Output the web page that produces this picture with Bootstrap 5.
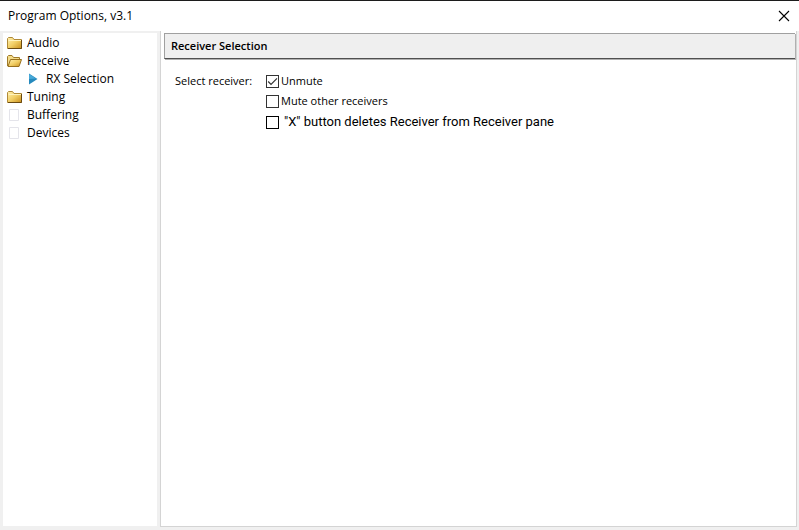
<!DOCTYPE html>
<html lang="en">
<head>
<meta charset="utf-8">
<meta name="viewport" content="width=device-width, initial-scale=1">
<title>Program Options, v3.1</title>
<link href="https://cdn.jsdelivr.net/npm/bootstrap@5.3.0/dist/css/bootstrap.min.css" rel="stylesheet">
<style>
body { background: #f0f0f0; color: #000; font: 12px/18px "Open Sans", "Noto Sans", sans-serif; }
.titlebar { background: #fff; border-top: 1px solid #1c1c1c; height: 31px; padding: 0 8px; }
.titlebar h1 { font-size: 12px; line-height: 18px; font-weight: 400; }
.close-btn { width: 14px; height: 20px; line-height: 0; }
.workspace { padding: 0 2px 3px 3px; gap: 3px; }
.tree { width: 154px; padding: 1px 4px; margin: 2px 0 1px; background: #fff; }
.tree a { color: #000; height: 18px; gap: 5px; }
.tree .subpages a { padding-left: 20px; gap: 3px; }
.tree svg { width: 15px; height: 14px; }
.tree .subpages svg { width: 16px; }
.pane { background: #fff; border: 1px solid #d4d4d4; border-top: 0; padding: 2px 1px 0 3px; }
.pane-head { background: #efefef; border: 1px solid #a0a0a0; border-right: 0; border-bottom-color: #505050; box-shadow: 1px 1px 0 #b0b0b0; padding: 2px 6px 3px; }
.pane-head h2 { font-size: 11px; line-height: 19px; font-weight: 600; }
.settings { font-size: 11px; padding: 12px 11px; }
.settings-label { width: 91px; }
.settings label { line-height: 20px; }
.box { appearance: none; width: 13px; height: 13px; margin: 0; border: 1px solid #333; background: #fff; border-radius: 0; }
.box:checked { background: #fff url("data:image/svg+xml,%3Csvg xmlns='http://www.w3.org/2000/svg' viewBox='0 0 11 11'%3E%3Cpath d='M1.2 5.5 4 8.3 10 2.3' fill='none' stroke='%23333' stroke-width='1.2'/%3E%3C/svg%3E"); }
.check { gap: 2px; }
.check-added { gap: 5px; padding-top: 1px; font-family: Roboto, "Liberation Sans", Arial, sans-serif; font-size: 13px; }
.check-added .box { border-color: #000; }
</style>
</head>
<body class="d-flex flex-column min-vh-100">
<header class="titlebar d-flex align-items-center justify-content-between">
  <h1 class="m-0">Program Options, v3.1</h1>
  <button type="button" class="close-btn btn p-0 border-0 rounded-0" aria-label="Close">
    <svg width="12" height="12" viewBox="0 0 12 12"><path d="M1 1 11 11M11 1 1 11" fill="none" stroke="#000" stroke-width="1.1"/></svg>
  </button>
</header>
<div class="workspace d-flex flex-grow-1">
  <nav class="tree flex-shrink-0" aria-label="Option pages">
    <ul class="list-unstyled m-0 p-0">
      <li><a class="d-flex align-items-center text-decoration-none" href="#audio">
        <svg viewBox="0 0 15 14"><defs><linearGradient id="gold" x1="0" y1="0" x2="1" y2="1"><stop offset="0" stop-color="#fff0b0"/><stop offset=".5" stop-color="#f2cf66"/><stop offset="1" stop-color="#c98f1c"/></linearGradient></defs><path d="M.5 12.5V2.5L1.5 1.5H5.5L7 3.5H14.5V12.5Z" fill="url(#gold)" stroke="#b08a38"/><path d="M1.5 4.5H14" stroke="#fff3bd"/><path d="M1 12.5H14.5V4" fill="none" stroke="#6a4a12"/></svg>Audio</a></li>
      <li><a class="d-flex align-items-center text-decoration-none" href="#receive">
        <svg viewBox="0 0 15 14"><path d="M.5 12V2.5L1.5 1.5H5L6.5 3.5H12.5V6" fill="#f4dc8a" stroke="#a07a28"/><path d="M1 12.5 3.5 5.5H14.5L12 12.5Z" fill="url(#gold)" stroke="#98701e"/></svg>Receive</a>
        <ul class="subpages list-unstyled m-0 p-0">
          <li><a class="d-flex align-items-center text-decoration-none" href="#rx" aria-current="page">
            <svg viewBox="0 0 16 14"><path d="M2 1.5 10.5 7 2 12.5Z" fill="#2589bd"/><path d="M2 2 9 6.5 2 7Z" fill="#48a9d8"/></svg>RX Selection</a></li>
        </ul>
      </li>
      <li><a class="d-flex align-items-center text-decoration-none" href="#tuning">
        <svg viewBox="0 0 15 14"><path d="M.5 12.5V2.5L1.5 1.5H5.5L7 3.5H14.5V12.5Z" fill="url(#gold)" stroke="#b08a38"/><path d="M1.5 4.5H14" stroke="#fff3bd"/><path d="M1 12.5H14.5V4" fill="none" stroke="#6a4a12"/></svg>Tuning</a></li>
      <li><a class="d-flex align-items-center text-decoration-none" href="#buffering">
        <svg viewBox="0 0 15 14"><path d="M2.5 1.5H11.5V12.5H2.5Z" fill="#fff" stroke="#e4e4ea"/></svg>Buffering</a></li>
      <li><a class="d-flex align-items-center text-decoration-none" href="#devices">
        <svg viewBox="0 0 15 14"><path d="M2.5 1.5H11.5V12.5H2.5Z" fill="#fff" stroke="#e4e4ea"/></svg>Devices</a></li>
    </ul>
  </nav>
  <main class="pane flex-grow-1" id="rx">
    <div class="pane-head"><h2 class="m-0">Receiver Selection</h2></div>
    <form class="settings d-flex">
      <label class="settings-label flex-shrink-0" for="unmute">Select receiver:</label>
      <div class="d-flex flex-column">
        <div class="check d-flex align-items-center"><input class="box" type="checkbox" id="unmute" checked><label for="unmute">Unmute</label></div>
        <div class="check d-flex align-items-center"><input class="box" type="checkbox" id="mute-others"><label for="mute-others">Mute other receivers</label></div>
        <div class="check check-added d-flex align-items-center"><input class="box" type="checkbox" id="x-deletes"><label for="x-deletes">"X" button deletes Receiver from Receiver pane</label></div>
      </div>
    </form>
  </main>
</div>
<script src="https://cdn.jsdelivr.net/npm/bootstrap@5.3.0/dist/js/bootstrap.bundle.min.js"></script>
</body>
</html>
